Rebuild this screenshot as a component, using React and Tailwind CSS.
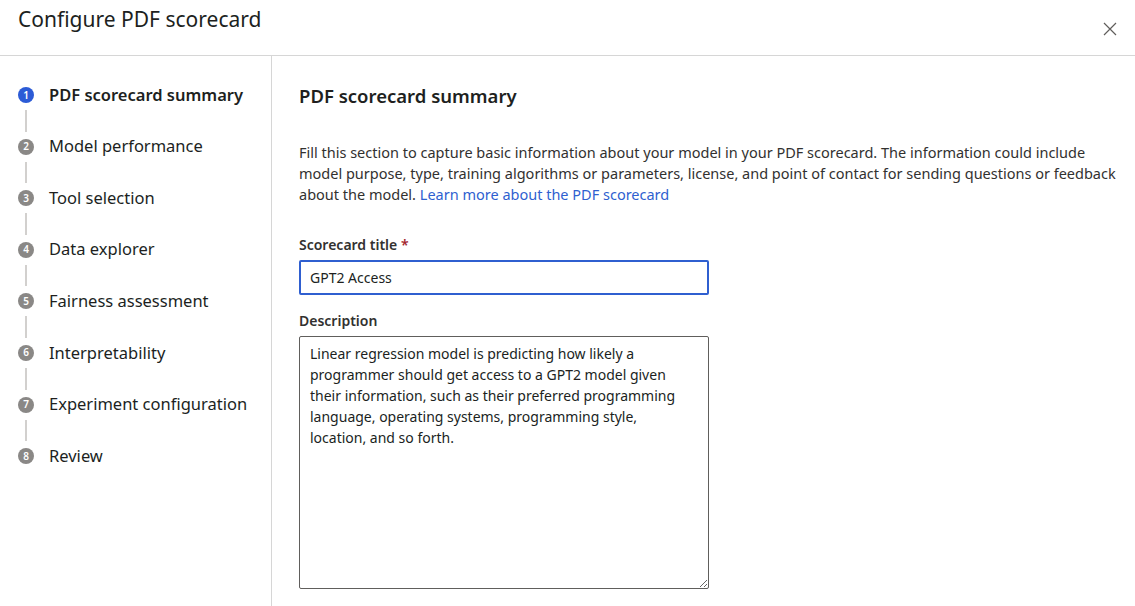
import React from "react";

const steps = [
  "PDF scorecard summary",
  "Model performance",
  "Tool selection",
  "Data explorer",
  "Fairness assessment",
  "Interpretability",
  "Experiment configuration",
  "Review",
];

function StepRail() {
  return (
    <div className="flex flex-col pt-[28px] pl-[18px]">
      {steps.map((label, i) => {
        const active = i === 0;
        return (
          <div key={label} className="flex flex-col">
            <div className="flex items-center h-[22px]">
              <div
                className={`w-4 h-4 rounded-full flex items-center justify-center text-[10px] font-semibold text-white ${
                  active ? "bg-[#2c5bd6]" : "bg-[#8a8886]"
                }`}
              >
                {i + 1}
              </div>
              <span
                className={`ml-[15px] text-[16.5px] text-[#201f1e] ${
                  active ? "font-semibold" : "font-normal"
                }`}
              >
                {label}
              </span>
            </div>
            {i < steps.length - 1 && (
              <div className="ml-[7px] w-[2px] h-[21.6px] my-[4px] bg-[#d2d0ce]" />
            )}
          </div>
        );
      })}
    </div>
  );
}

export default function App() {
  return (
    <div
      className="w-[1135px] h-[606px] bg-white flex flex-col overflow-hidden text-[#323130]"
      style={{ fontFamily: '"Noto Sans", "Open Sans", sans-serif' }}
    >
      {/* header */}
      <div className="h-[56px] shrink-0 flex items-start justify-between border-b border-[#d6d6d6]">
        <h1 className="pl-[18px] pt-[4px] text-[21px] font-normal text-[#201f1e]">
          Configure PDF scorecard
        </h1>
        <button className="mt-[21px] mr-[17px] w-4 h-4 flex items-center justify-center text-[#605e5c]">
          <svg width="14" height="14" viewBox="0 0 14 14" fill="none">
            <path d="M1 1L13 13M13 1L1 13" stroke="currentColor" strokeWidth="1.2" />
          </svg>
        </button>
      </div>

      <div className="flex flex-1 min-h-0">
        {/* left nav */}
        <div className="w-[272px] shrink-0 border-r border-[#d6d6d6]">
          <StepRail />
        </div>

        {/* main */}
        <div className="flex-1 pl-[27px] pr-[10px]">
          <h2 className="mt-[26px] text-[18.5px] font-semibold text-[#201f1e]">
            PDF scorecard summary
          </h2>
          <p className="mt-[32px] text-[14.5px] leading-[21px] text-[#323130]">
            Fill this section to capture basic information about your model in
            your PDF scorecard. The information could include model purpose,
            type, training algorithms or parameters, license, and point of
            contact for sending questions or feedback about the model.{" "}
            <a href="#" className="text-[#2f5fd0]">
              Learn more about the PDF scorecard
            </a>
          </p>

          <label className="block mt-[29px] text-[14px] font-semibold text-[#323130]">
            Scorecard title <span className="text-[#a4262c]">*</span>
          </label>
          <div className="mt-[5px] w-[410px] h-[35px] border-2 border-[#2f5fd0] rounded-[2px] flex items-center px-[9px] text-[14px] text-[#201f1e]">
            GPT2 Access
          </div>

          <label className="block mt-[15px] text-[14px] font-semibold text-[#323130]">
            Description
          </label>
          <textarea
            className="mt-[5px] w-[410px] h-[253px] border border-[#605e5c] rounded-[2px] pl-[10px] pr-[16px] py-[6px] text-[14px] leading-[21px] text-[#201f1e] resize-y outline-none"
            style={{ fontFamily: '"Noto Sans", "Open Sans", sans-serif' }}
            defaultValue="Linear regression model is predicting how likely a programmer should get access to a GPT2 model given their information, such as their preferred programming language, operating systems, programming style, location, and so forth."
          />
        </div>
      </div>
    </div>
  );
}
